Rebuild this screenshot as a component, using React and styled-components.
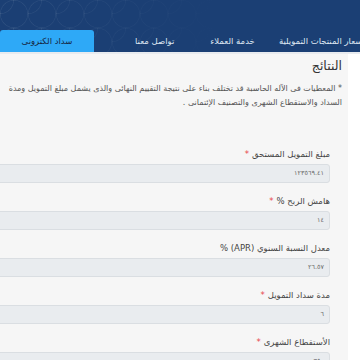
import React from "react";
import styled, { createGlobalStyle } from "styled-components";

const GlobalStyle = createGlobalStyle`
  html, body {
    margin: 0;
    padding: 0;
    background: #ffffff;
    overflow: hidden;
  }
  body {
    font-family: "DejaVu Sans", "Noto Sans", sans-serif;
  }
`;

const Header = styled.header`
  height: 52px;
  background-color: #1b3f74;
  background-image: linear-gradient(90deg, rgba(27, 63, 116, 0) 0%, rgba(27, 63, 116, 0.6) 35%, #1b3f74 60%),
    radial-gradient(circle at 0 0, transparent 13px, rgba(255, 255, 255, 0.07) 13.5px, transparent 14.5px),
    radial-gradient(circle at 14px 14px, transparent 13px, rgba(255, 255, 255, 0.07) 13.5px, transparent 14.5px);
  background-size: 100% 100%, 28px 28px, 28px 28px;
  display: flex;
  align-items: flex-end;
`;

const Nav = styled.nav`
  display: flex;
  align-items: center;
  height: 22px;
  white-space: nowrap;
`;

const PayButton = styled.button`
  width: 94px;
  height: 22px;
  border: none;
  border-radius: 3px 3px 0 0;
  background: #2ea9f7;
  color: #16263f;
  font-family: "DejaVu Sans", sans-serif;
  font-size: 8.5px;
  padding: 0;
  direction: rtl;
`;

const NavLink = styled.a`
  color: #dfe7f2;
  font-size: 8.5px;
  margin-left: ${(p) => p.$gap}px;
  direction: rtl;
`;

const Divider = styled.div`
  height: 2px;
  background: #e8ebef;
`;

const Main = styled.div`
  display: flex;
  direction: ltr;
`;

const Card = styled.section`
  width: 348px;
  min-height: 306px;
  background: #f6f6f6;
  direction: rtl;
  padding: 0 6px 0 0;
  box-sizing: border-box;
`;

const Title = styled.h2`
  margin: 0;
  font-weight: 400;
  font-size: 12.5px;
  line-height: 12px;
  padding-top: 6px;
  color: #333;
`;

const Note = styled.p`
  margin: 10px 0 0;
  font-size: 8px;
  line-height: 14px;
  color: #555;
  white-space: nowrap;
`;

const Form = styled.div`
  margin-top: 38px;
  padding-right: 12px;
  display: flex;
  flex-direction: column;
`;

const Field = styled.div`
  display: flex;
  flex-direction: column;
  margin-bottom: 12px;
`;

const Label = styled.label`
  font-size: 8.5px;
  line-height: 12px;
  color: #454545;
  margin-bottom: 4px;
`;

const Star = styled.span`
  color: #e8454a;
  margin-right: 3px;
`;

const Input = styled.div`
  height: 19px;
  margin-left: -20px;
  box-sizing: border-box;
  border: 1px solid #dadee2;
  border-radius: 3px;
  background: #e9ecef;
  color: #6b6b6b;
  font-size: 6.5px;
  line-height: 17px;
  padding-right: 5px;
`;

const fields = [
  { label: "مبلغ التمويل المستحق", value: "١٢٣٥٦٩.٤١", required: true },
  { label: "هامش الربح %", value: "١٤", required: true },
  { label: "معدل النسبة السنوي (APR) %", value: "٢٦.٥٧", required: false },
  { label: "مدة سداد التمويل", value: "٦", required: true },
  { label: "الأستقطاع الشهرى", value: "٣٥٠", required: true },
];

function App() {
  return (
    <>
      <GlobalStyle />
      <Header>
        <Nav>
          <PayButton>سداد الكترونى</PayButton>
          <NavLink $gap={41}>تواصل معنا</NavLink>
          <NavLink $gap={36}>خدمة العملاء</NavLink>
          <NavLink $gap={24}>أسعار المنتجات التمويلية</NavLink>
        </Nav>
      </Header>
      <Divider />
      <Main>
        <Card>
          <Title>النتائج</Title>
          <Note>
            * المعطيات فى الآله الحاسبة قد تختلف بناء على نتيجة التقييم النهائى والذى يشمل مبلغ التمويل ومدة
            <br />
            السداد والاستقطاع الشهرى والتصنيف الإئتمانى .
          </Note>
          <Form>
            {fields.map((f) => (
              <Field key={f.label}>
                <Label>
                  {f.label}
                  {f.required && <Star>*</Star>}
                </Label>
                <Input>{f.value}</Input>
              </Field>
            ))}
          </Form>
        </Card>
      </Main>
    </>
  );
}

export default App;
